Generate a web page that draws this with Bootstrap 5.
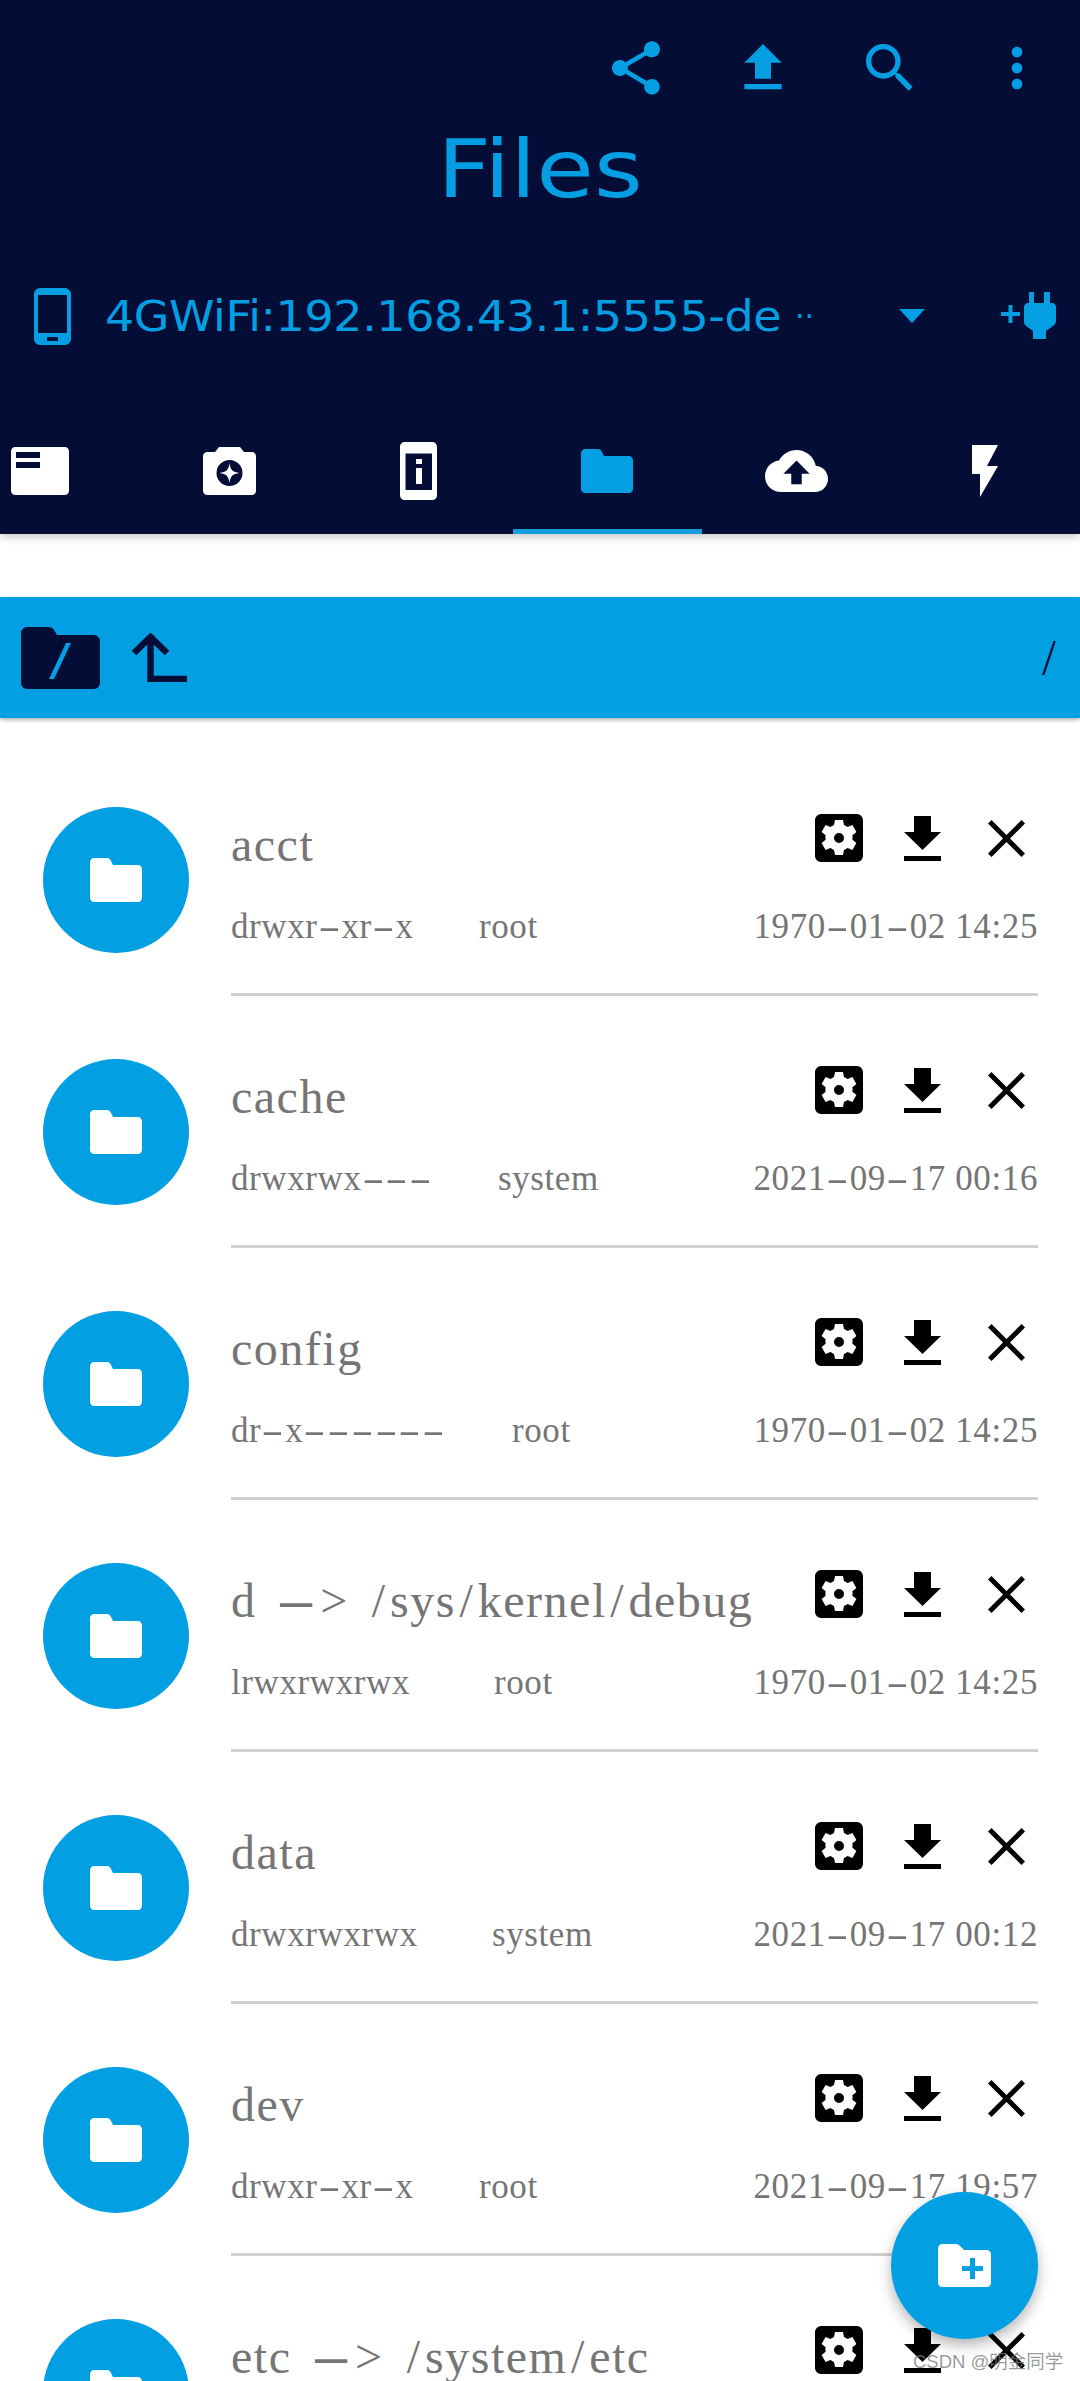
<!DOCTYPE html>
<html lang="en">
<head>
    <meta charset="UTF-8">
    <meta name="viewport" content="width=device-width, initial-scale=1.0">
    <title>Files</title>
    <link rel="stylesheet" href="https://cdn.jsdelivr.net/npm/bootstrap@5.3.0/dist/css/bootstrap.min.css">
    <style>
        html, body { height: 2381px; overflow: hidden; }
        body { position: relative; background: #fff; font-family: "Liberation Serif", serif; }
        svg { display: block; fill: currentColor; flex: none; }
        .app-head { background: #030d35; color: #049fe3; height: 534px; overflow: hidden; box-shadow: 0 3px 8px rgba(0,0,0,.22); position: relative; }
        .top-actions { height: 136px; }
        .top-btn { width: 127px; }
        .page-title { height: 68px; line-height: 68px; font-family: "DejaVu Sans", sans-serif; font-weight: 400; font-size: 80px; margin: 0; transform: scaleX(1.17); }
        .device-row { height: 124px; margin-top: 50px; padding-left: 34px; }
        .device-name { font-family: "DejaVu Sans", sans-serif; font-size: 43px; letter-spacing: -.4px; margin-left: 34px; margin-right: 45px; width: 645px; white-space: nowrap; overflow: hidden; transform: scaleX(1.07); transform-origin: left center; }
        .device-more { width: 40px; font-size: 30px; font-family: "DejaVu Sans", sans-serif; }
        .drop-tri { margin-left: 64px; }
        .tab-strip { height: 126px; margin-top: 30px; margin-left: -54.5px; width: 1134px; }
        .tab-cell { width: 189px; height: 126px; color: #fff; }
        .tab-cell.on { color: #049fe3; border-bottom: 5px solid #129cdb; padding-top: 5px; }
        .path-bar { height: 121px; margin-top: 63px; background: #029fe3; color: #030d35; padding: 0 24px 0 21px; box-shadow: 0 2px 4px rgba(0,0,0,.3); }
        .up-arrow { fill: none; stroke: currentColor; stroke-width: 6.5; margin-left: 31px; }
        .path-text { font-size: 50px; font-weight: 400; }
        .file-list { padding-top: 89px; height: 1663px; overflow: hidden; }
        .file-row { height: 252px; }
        .folder-disc { width: 146px; height: 146px; margin-left: 43px; margin-right: 42px; background: #029fe3; color: #fff; }
        .file-body { width: 807px; height: 189px; border-bottom: 3px solid #d0d0d0; color: #757575; }
        .file-name { font-size: 48px; line-height: 60px; margin-top: 8px; letter-spacing: 1.5px; word-spacing: 6px; white-space: nowrap; }
        .file-name .wide-dash { width: .92em; transform: scaleX(2.6); }
        .wide-slash { margin: 0 3.500px; }
        .file-acts { margin-top: 7px; color: #000; padding-right: 13px; }
        .act-down { margin-left: 41px; }
        .act-close { margin-left: 47px; }
        .file-meta { font-size: 35px; line-height: 40px; margin-top: 32px; letter-spacing: .6px; white-space: nowrap; }
        .file-perm { display: inline-block; width: 248px; }
        .perm-b { width: 267px; }
        .perm-c { width: 281px; }
        .perm-d { width: 263px; }
        .perm-e { width: 261px; }
        .wide-dash { display: inline-block; width: .68em; text-align: center; transform: scaleX(1.9); }
        .add-btn { position: absolute; left: 891px; top: 2192px; width: 147px; height: 147px; background: #029fe3; color: #fff; box-shadow: 0 6px 14px rgba(0,0,0,.3); }
        .site-mark { position: absolute; left: 913px; top: 2349px; font: 18.5px/26px "Liberation Sans", "Noto Sans CJK SC", sans-serif; color: rgba(120,120,120,.75); white-space: nowrap; }
    </style>
</head>
<body>
    <svg width="0" height="0" class="position-absolute">
        <symbol id="i-folder" viewBox="0 0 52 44"><path d="M4 0h13c2 0 3 1 4 3l2 4h25c2 0 4 2 4 4v29c0 2-2 4-4 4H4c-2 0-4-2-4-4V4c0-2 2-4 4-4z"/></symbol>
        <symbol id="i-gear" viewBox="0 0 48 48"><path fill-rule="evenodd" d="M6 0h36c3 0 6 3 6 6v36c0 3-3 6-6 6H6c-3 0-6-3-6-6V6c0-3 3-6 6-6zM20 6l-1 5c-1.300.5-2.500 1.200-3.600 2l-4.800-1.900-4 7 4 3.200c-.2 1.800-.2 2.800 0 4.400l-4 3.200 4 7 4.800-1.900c1.100.8 2.300 1.500 3.600 2l1 5h8l1-5c1.300-.5 2.500-1.200 3.600-2l4.800 1.900 4-7-4-3.200c.2-1.600.2-2.600 0-4.400l4-3.200-4-7-4.800 1.900c-1.100-.8-2.300-1.500-3.600-2l-1-5zM24 19a5 5 0 1 1 0 10 5 5 0 0 1 0-10z"/></symbol>
        <symbol id="i-down" viewBox="0 0 37 45"><path d="M10 0h17v16h10L18.500 34 0 16h10zM0 40h37v5H0z"/></symbol>
        <symbol id="i-close" viewBox="0 0 37 37"><path d="M3.500 0L18.500 15 33.500 0 37 3.500 22 18.500 37 33.500 33.500 37 18.500 22 3.500 37 0 33.500 15 18.500 0 3.500z"/></symbol>
    </svg>

    <header class="app-head">
        <div class="top-actions d-flex justify-content-end align-items-center">
            <div class="top-btn d-flex justify-content-center"><svg width="64" height="64" viewBox="0 0 24 24"><path d="M18 16.080c-.76 0-1.440.3-1.960.77L8.910 12.700c.05-.23.09-.46.09-.7s-.04-.47-.09-.7l7.050-4.110c.54.5 1.250.81 2.040.81 1.660 0 3-1.340 3-3s-1.340-3-3-3-3 1.340-3 3c0 .24.04.47.09.7L8.040 9.810C7.500 9.310 6.790 9 6 9c-1.660 0-3 1.340-3 3s1.340 3 3 3c.79 0 1.500-.31 2.040-.81l7.120 4.160c-.05.21-.08.43-.08.65 0 1.610 1.310 2.920 2.920 2.920s2.920-1.310 2.920-2.920-1.310-2.920-2.920-2.920z"/></svg></div>
            <div class="top-btn d-flex justify-content-center"><svg width="64" height="64" viewBox="0 0 24 24"><path d="M9 16h6v-6h4l-7-7-7 7h4zm-4 2h14v2H5z"/></svg></div>
            <div class="top-btn d-flex justify-content-center"><svg width="64" height="64" viewBox="0 0 24 24"><path d="M15.500 14h-.79l-.28-.27C15.410 12.590 16 11.110 16 9.500 16 5.910 13.090 3 9.500 3S3 5.910 3 9.500 5.910 16 9.500 16c1.610 0 3.090-.59 4.230-1.570l.27.28v.79l5 4.990L20.490 19l-4.990-5zm-6 0C7.010 14 5 11.990 5 9.500S7.010 5 9.500 5 14 7.010 14 9.500 11.990 14 9.500 14z"/></svg></div>
            <div class="top-btn d-flex justify-content-center"><svg width="64" height="64" viewBox="0 0 24 24"><path d="M12 8c1.100 0 2-.9 2-2s-.9-2-2-2-2 .9-2 2 .9 2 2 2zm0 2c-1.100 0-2 .9-2 2s.9 2 2 2 2-.9 2-2-.9-2-2-2zm0 6c-1.100 0-2 .9-2 2s.9 2 2 2 2-.9 2-2-.9-2-2-2z"/></svg></div>
        </div>
        <h1 class="page-title text-center">Files</h1>
        <div class="device-row d-flex align-items-center">
            <svg width="37" height="57" viewBox="0 0 37 57"><path fill-rule="evenodd" d="M6 0h25c3 0 6 3 6 6v45c0 3-3 6-6 6H6c-3 0-6-3-6-6V6c0-3 3-6 6-6zM4 7v38h29V7zM13 49v4h11v-4z"/></svg>
            <div class="device-name">4GWiFi:192.168.43.1:5555-de</div>
            <div class="device-more">··</div>
            <svg class="drop-tri" width="26" height="14" viewBox="0 0 26 14"><path d="M0 0h26L13 14z"/></svg>
            <svg class="ms-auto me-4" width="55" height="48" viewBox="0 0 55 48"><path d="M0 20h7.500v-7h4v7H19v4h-7.500v7h-4v-7H0z"/><path d="M28 0h5v11h10V0h6v11h2c2 0 4 2 4 4v14c0 2-1 3-3 5l-7 5v8H32v-8l-7-5c-2-2-2-3-2-5V15c0-2 2-4 4-4h1z"/></svg>
        </div>
        <div class="tab-strip d-flex">
            <div class="tab-cell d-flex justify-content-center align-items-center"><svg width="58" height="48" viewBox="0 0 58 48"><path fill-rule="evenodd" d="M4 0h50c2 0 4 2 4 4v40c0 2-2 4-4 4H4c-2 0-4-2-4-4V4c0-2 2-4 4-4zM5 5v6h24V5zM5 15v6h24v-6z"/></svg></div>
            <div class="tab-cell d-flex justify-content-center align-items-center"><svg width="53" height="48" viewBox="0 0 53 48"><path fill-rule="evenodd" d="M16 0h21l4 5h8c2 0 4 2 4 4v35c0 2-2 4-4 4H4c-2 0-4-2-4-4V9c0-2 2-4 4-4h8zM26.500 13a13 13 0 1 0 0 26 13 13 0 0 0 0-26zM26.500 16c1 7 3 9 10 10-7 1-9 3-10 10-1-7-3-9-10-10 7-1 9-3 10-10z"/></svg></div>
            <div class="tab-cell d-flex justify-content-center align-items-center"><svg width="37" height="58" viewBox="0 0 37 58"><path fill-rule="evenodd" d="M5 0h27c3 0 5 2 5 5v48c0 3-2 5-5 5H5c-3 0-5-2-5-5V5c0-3 2-5 5-5zM5.500 11.500v36.500H32V11.500zM16 17h6v5h-6zM16 26h6v16h-6z"/></svg></div>
            <div class="tab-cell on d-flex justify-content-center align-items-center"><svg width="52" height="44"><use href="#i-folder"/></svg></div>
            <div class="tab-cell d-flex justify-content-center align-items-center"><svg width="63" height="42" viewBox="0 4 24 16"><path fill-rule="evenodd" d="M19.350 10.040C18.670 6.590 15.640 4 12 4 9.110 4 6.600 5.640 5.350 8.040 2.340 8.360 0 10.910 0 14c0 3.310 2.690 6 6 6h13c2.760 0 5-2.240 5-5 0-2.640-2.050-4.780-4.650-4.960zM14 13v4h-4v-4H7l5-5 5 5h-3z"/></svg></div>
            <div class="tab-cell d-flex justify-content-center align-items-center"><svg width="26" height="52" viewBox="0 0 26 52"><path d="M0 0h26L15 21h11L8 52V29H0z"/></svg></div>
        </div>
    </header>

    <div class="path-bar d-flex align-items-center">
        <svg width="79" height="62" viewBox="0 0 79 62"><path fill-rule="evenodd" d="M6 0h21c3 0 5 1 6 3l3 5h37c3 0 6 3 6 6v42c0 3-3 6-6 6H6c-3 0-6-3-6-6V6c0-3 3-6 6-6zM45 16L28 52h5l17-36z"/></svg>
        <svg class="up-arrow" width="56" height="49" viewBox="0 0 56 49"><path d="M3 20L19.500 4 36 20M19.500 6V46H56"/></svg>
        <div class="path-text ms-auto">/</div>
    </div>

    <main class="file-list">
        <div class="file-row d-flex">
            <div class="folder-disc rounded-circle d-flex justify-content-center align-items-center"><svg width="52" height="44"><use href="#i-folder"/></svg></div>
            <div class="file-body">
                <div class="d-flex justify-content-between align-items-start">
                    <div class="file-name dash-text">acct</div>
                    <div class="file-acts d-flex align-items-center"><svg width="48" height="48"><use href="#i-gear"/></svg><svg class="act-down" width="37" height="45"><use href="#i-down"/></svg><svg class="act-close" width="37" height="37"><use href="#i-close"/></svg></div>
                </div>
                <div class="file-meta d-flex justify-content-between"><div><span class="file-perm dash-text">drwxr-xr-x</span>root</div><div class="dash-text">1970-01-02 14:25</div></div>
            </div>
        </div>
        <div class="file-row d-flex">
            <div class="folder-disc rounded-circle d-flex justify-content-center align-items-center"><svg width="52" height="44"><use href="#i-folder"/></svg></div>
            <div class="file-body">
                <div class="d-flex justify-content-between align-items-start">
                    <div class="file-name dash-text">cache</div>
                    <div class="file-acts d-flex align-items-center"><svg width="48" height="48"><use href="#i-gear"/></svg><svg class="act-down" width="37" height="45"><use href="#i-down"/></svg><svg class="act-close" width="37" height="37"><use href="#i-close"/></svg></div>
                </div>
                <div class="file-meta d-flex justify-content-between"><div><span class="file-perm perm-b dash-text">drwxrwx---</span>system</div><div class="dash-text">2021-09-17 00:16</div></div>
            </div>
        </div>
        <div class="file-row d-flex">
            <div class="folder-disc rounded-circle d-flex justify-content-center align-items-center"><svg width="52" height="44"><use href="#i-folder"/></svg></div>
            <div class="file-body">
                <div class="d-flex justify-content-between align-items-start">
                    <div class="file-name dash-text">config</div>
                    <div class="file-acts d-flex align-items-center"><svg width="48" height="48"><use href="#i-gear"/></svg><svg class="act-down" width="37" height="45"><use href="#i-down"/></svg><svg class="act-close" width="37" height="37"><use href="#i-close"/></svg></div>
                </div>
                <div class="file-meta d-flex justify-content-between"><div><span class="file-perm perm-c dash-text">dr-x------</span>root</div><div class="dash-text">1970-01-02 14:25</div></div>
            </div>
        </div>
        <div class="file-row d-flex">
            <div class="folder-disc rounded-circle d-flex justify-content-center align-items-center"><svg width="52" height="44"><use href="#i-folder"/></svg></div>
            <div class="file-body">
                <div class="d-flex justify-content-between align-items-start">
                    <div class="file-name dash-text">d -&gt; /sys/kernel/debug</div>
                    <div class="file-acts d-flex align-items-center"><svg width="48" height="48"><use href="#i-gear"/></svg><svg class="act-down" width="37" height="45"><use href="#i-down"/></svg><svg class="act-close" width="37" height="37"><use href="#i-close"/></svg></div>
                </div>
                <div class="file-meta d-flex justify-content-between"><div><span class="file-perm perm-d dash-text">lrwxrwxrwx</span>root</div><div class="dash-text">1970-01-02 14:25</div></div>
            </div>
        </div>
        <div class="file-row d-flex">
            <div class="folder-disc rounded-circle d-flex justify-content-center align-items-center"><svg width="52" height="44"><use href="#i-folder"/></svg></div>
            <div class="file-body">
                <div class="d-flex justify-content-between align-items-start">
                    <div class="file-name dash-text">data</div>
                    <div class="file-acts d-flex align-items-center"><svg width="48" height="48"><use href="#i-gear"/></svg><svg class="act-down" width="37" height="45"><use href="#i-down"/></svg><svg class="act-close" width="37" height="37"><use href="#i-close"/></svg></div>
                </div>
                <div class="file-meta d-flex justify-content-between"><div><span class="file-perm perm-e dash-text">drwxrwxrwx</span>system</div><div class="dash-text">2021-09-17 00:12</div></div>
            </div>
        </div>
        <div class="file-row d-flex">
            <div class="folder-disc rounded-circle d-flex justify-content-center align-items-center"><svg width="52" height="44"><use href="#i-folder"/></svg></div>
            <div class="file-body">
                <div class="d-flex justify-content-between align-items-start">
                    <div class="file-name dash-text">dev</div>
                    <div class="file-acts d-flex align-items-center"><svg width="48" height="48"><use href="#i-gear"/></svg><svg class="act-down" width="37" height="45"><use href="#i-down"/></svg><svg class="act-close" width="37" height="37"><use href="#i-close"/></svg></div>
                </div>
                <div class="file-meta d-flex justify-content-between"><div><span class="file-perm dash-text">drwxr-xr-x</span>root</div><div class="dash-text">2021-09-17 19:57</div></div>
            </div>
        </div>
        <div class="file-row d-flex">
            <div class="folder-disc rounded-circle d-flex justify-content-center align-items-center"><svg width="52" height="44"><use href="#i-folder"/></svg></div>
            <div class="file-body">
                <div class="d-flex justify-content-between align-items-start">
                    <div class="file-name dash-text">etc -&gt; /system/etc</div>
                    <div class="file-acts d-flex align-items-center"><svg width="48" height="48"><use href="#i-gear"/></svg><svg class="act-down" width="37" height="45"><use href="#i-down"/></svg><svg class="act-close" width="37" height="37"><use href="#i-close"/></svg></div>
                </div>
            </div>
        </div>
    </main>
    <button class="add-btn btn rounded-circle border-0 d-flex justify-content-center align-items-center p-0"><svg width="53" height="43" viewBox="0 0 53 43"><path fill-rule="evenodd" d="M4 0h14c2 0 3 1 4 2l4 4h23c2 0 4 2 4 4v29c0 2-2 4-4 4H4c-2 0-4-2-4-4V4c0-2 2-4 4-4zM32 14v8h-8v5h8v8h5v-8h8v-5h-8v-8z"/></svg></button>
    <div class="site-mark">CSDN @明金同学</div>

    <script>
        // hyphens and slashes in this list are much wider than the ones in Liberation Serif
        document.querySelectorAll(".dash-text").forEach(function (el) {
            el.innerHTML = el.innerHTML.replace(/[-\/]/g, function (ch) {
                return '<span class="' + (ch === "-" ? "wide-dash" : "wide-slash") + '">' + ch + '</span>';
            });
        });
    </script>
    <script src="https://cdn.jsdelivr.net/npm/bootstrap@5.3.0/dist/js/bootstrap.bundle.min.js"></script>
</body>
</html>
